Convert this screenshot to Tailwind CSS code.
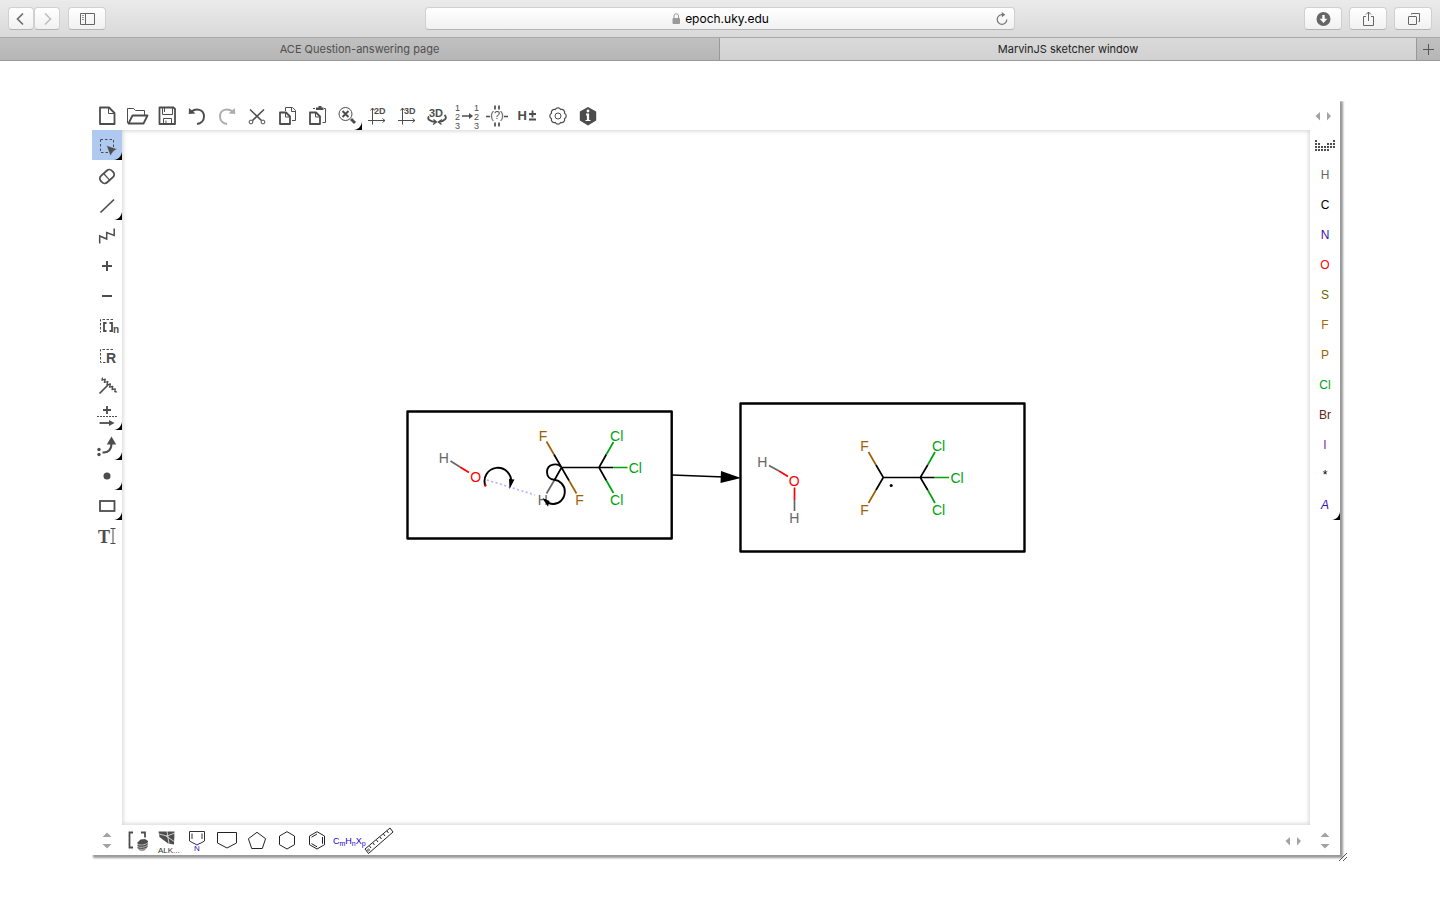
<!DOCTYPE html>
<html lang="en">
<head>
<meta charset="utf-8">
<meta name="viewport" content="width=device-width, initial-scale=1">
<title>MarvinJS sketcher window</title>
<script src="https://cdn.jsdelivr.net/npm/@tailwindcss/browser@4"></script>
</head>
<body class="flex min-h-screen flex-col bg-white font-['Liberation_Sans',Arial,sans-serif]">

<svg class="hidden" aria-hidden="true">
  <symbol id="corner" viewBox="0 0 30 30"><path d="M30 22V30H22C26 29.500 29 27 30 22Z" fill="#000" stroke="none"/></symbol>
  <symbol id="leftright" viewBox="0 0 30 30"><path d="M5.500 16 10 12V20.500ZM21 16 17 12V20.500Z" fill="#a3a3a3" stroke="none"/></symbol>
  <symbol id="updown" viewBox="0 0 30 30"><path d="M10.500 12 15 7.500 19.500 12ZM10.500 19 15 23.500 19.500 19Z" fill="#a3a3a3" stroke="none"/></symbol>
</svg>

<header class="font-[Inter,'Liberation_Sans',sans-serif]">
  <div class="flex h-[38px] items-center border-b border-[#a8a8a8] bg-linear-to-b from-[#ebebeb] to-[#d9d9d9] px-2">
    <div class="flex flex-1 items-center">
      <button aria-label="Back" class="flex h-[23px] w-[26px] items-center justify-center rounded border border-[#d0d0d0] border-b-[#b4b4b4] bg-linear-to-b from-white to-[#f1f1f1]">
        <svg class="size-4 fill-none stroke-[#6e6e6e]" viewBox="0 0 16 16"><path d="M10 2.500 4.500 8l5.500 5.500" stroke-width="1.700"/></svg>
      </button>
      <button aria-label="Forward" class="flex h-[23px] w-[26px] items-center justify-center rounded border border-[#d0d0d0] border-b-[#b4b4b4] bg-linear-to-b from-white to-[#f1f1f1]">
        <svg class="size-4 fill-none stroke-[#c0c0c0]" viewBox="0 0 16 16"><path d="M6 2.500 11.500 8 6 13.500" stroke-width="1.700"/></svg>
      </button>
      <button aria-label="Sidebar" class="ml-2 flex h-[23px] w-[38px] items-center justify-center rounded border border-[#d0d0d0] border-b-[#b4b4b4] bg-linear-to-b from-white to-[#f1f1f1]">
        <svg class="size-4 fill-none stroke-[#666]" viewBox="0 0 16 16"><path d="M1.500 2.500H15.500V13.500H1.500ZM6.500 2.500V13.500"/><path d="M3 4.500h2M3 6.500h2M3 8.500h2" stroke="#999"/></svg>
      </button>
    </div>
    <div class="relative flex h-[23px] w-[41.400%] items-center justify-center gap-1 rounded border border-[#d0d0d0] border-b-[#b4b4b4] bg-linear-to-b from-white to-[#f1f1f1]">
      <svg class="h-3 w-[10px] fill-none stroke-[#9a9a9a]" viewBox="0 0 10 12"><path d="M2 5.500H8.500V10.500H2Z" fill="#9a9a9a"/><path d="M3 6V3a2.200 2.200 0 0 1 4.500 0V6"/></svg>
      <input aria-label="Address" value="epoch.uky.edu" class="field-sizing-content bg-transparent text-xs text-black outline-none">
      <button aria-label="Reload" class="absolute right-1 flex">
        <svg class="size-4 fill-none stroke-[#777]" viewBox="0 0 16 16"><path d="M12.800 8.500A4.800 4.800 0 1 1 8 3.700H9.500" stroke-width="1.200"/><path d="M7.800 1 11.300 3.700 7.800 6.300Z" fill="#777" stroke="none"/></svg>
      </button>
    </div>
    <div class="flex flex-1 items-center justify-end gap-[7px]">
      <button aria-label="Downloads" class="flex h-[23px] w-[38px] items-center justify-center rounded border border-[#d0d0d0] border-b-[#b4b4b4] bg-linear-to-b from-white to-[#f1f1f1]">
        <svg class="size-4" viewBox="0 0 16 16"><circle cx="8.500" cy="8" r="7" fill="#666"/><path d="M7.300 4H9.700V7.800H12.300L8.500 12 4.700 7.800H7.300Z" fill="#fff"/></svg>
      </button>
      <button aria-label="Share" class="flex h-[23px] w-[38px] items-center justify-center rounded border border-[#d0d0d0] border-b-[#b4b4b4] bg-linear-to-b from-white to-[#f1f1f1]">
        <svg class="size-4 fill-none stroke-[#666]" viewBox="0 0 16 16"><path d="M6 5.500H3.500V14.500H13.500V5.500H11M8.500 10V1M6 3.500 8.500 1 11 3.500"/></svg>
      </button>
      <button aria-label="Tabs" class="flex h-[23px] w-[38px] items-center justify-center rounded border border-[#d0d0d0] border-b-[#b4b4b4] bg-linear-to-b from-white to-[#f1f1f1]">
        <svg class="size-4 fill-none stroke-[#666]" viewBox="0 0 16 16"><rect x="3.500" y="5.500" width="8" height="8" rx=".5"/><path d="M6.500 3.500V2.500H14.500V10.500H13.500"/></svg>
      </button>
    </div>
  </div>
  <nav class="flex h-[23px] border-b border-[#9b9b9b] text-[11px]">
    <a href="#" class="flex w-1/2 items-center justify-center border-r border-[#999] bg-linear-to-b from-[#c1c1c1] to-[#b6b6b6] text-[#4f4f4f]">ACE Question-answering page</a>
    <a href="#" class="flex flex-1 items-center justify-center bg-linear-to-b from-[#dadada] to-[#d1d1d1] text-[#222]">MarvinJS sketcher window</a>
    <button aria-label="New tab" class="flex w-6 items-center justify-center border-l border-[#999] bg-linear-to-b from-[#c1c1c1] to-[#b6b6b6]">
      <svg class="size-3 stroke-[#555]" viewBox="0 0 12 12"><path d="M0 6.500H11M5.500 1V12"/></svg>
    </button>
  </nav>
</header>

<main class="flex flex-1 pt-[39px] pr-[100px] pb-[45px] pl-[92px]">
  <div class="relative flex flex-1 flex-col bg-white fill-none stroke-[#4d4d4d] shadow-[2px_2px_2px_1px_#999] [clip-path:inset(1px_-8px_-8px_0px)]">

    <div class="flex h-[30px]" role="toolbar" aria-label="General">
      <button aria-label="New"><svg class="size-[30px]" viewBox="0 0 30 30"><path d="M8 7.500H17L22.500 13V24H8Z" stroke-width="1.800" stroke-linejoin="round"/><path d="M16.500 8V13.500H22"/></svg></button>
      <button aria-label="Open"><svg class="size-[30px]" viewBox="0 0 30 30"><path d="M5.500 23V8.500H11.500L13.500 10.500H22.500V15"/><path d="M6.500 23.500 10.500 15.500H25.500L21.500 23.500Z" stroke-width="1.800" stroke-linejoin="round"/></svg></button>
      <button aria-label="Save"><svg class="size-[30px]" viewBox="0 0 30 30"><path d="M7.500 7.500H21.500L23 9V24H7.500Z" stroke-width="1.800" stroke-linejoin="round"/><path d="M10.500 8V14.500H20.500V8M12.500 8V12M11.500 24V18.500H19.500V24M14 20.500V23"/></svg></button>
      <button aria-label="Undo"><svg class="size-[30px]" viewBox="0 0 30 30"><path d="M9.500 11.500C14 8 22 9 22 16.500C22 21 18.500 23.500 15 24" stroke-width="2"/><path d="M7 8 6.800 14 13.500 13.500Z" fill="#4d4d4d" stroke="none"/></svg></button>
      <button aria-label="Redo"><svg class="size-[30px]" viewBox="0 0 30 30"><path d="M20.500 11.500C16 8 8 9 8 16.500C8 21 11.500 23.500 15 24" stroke="#adadad" stroke-width="2"/><path d="M23 8 23.200 14 16.500 13.500Z" fill="#adadad" stroke="none"/></svg></button>
      <button aria-label="Cut"><svg class="size-[30px]" viewBox="0 0 30 30"><path d="M22 9.500 10.500 20.500M8 9.500 19.500 20.500" stroke-width="1.600"/><circle cx="9" cy="22" r="1.900"/><circle cx="21" cy="22" r="1.900"/></svg></button>
      <button aria-label="Copy"><svg class="size-[30px]" viewBox="0 0 30 30"><path d="M13.500 11V7.500H20.500L23.500 10.500V20.500H20M19.500 8V11.500H23"/><path d="M8 12.500H14L18 16.500V24H8Z" stroke-width="1.800" stroke-linejoin="round"/><path d="M13.500 13V17H17.500"/></svg></button>
      <button aria-label="Paste"><svg class="size-[30px]" viewBox="0 0 30 30"><path d="M11 8.500H13M22 8.500H23.500V22.500H20.500"/><path d="M14 7.500H16.500V6H19.500V7.500H21.500V10H14Z" fill="#4d4d4d" stroke="none"/><path d="M8 12.500H14L18 16.500V24H8Z" stroke-width="1.800" stroke-linejoin="round"/><path d="M13.500 13V17H17.500"/></svg></button>
      <button aria-label="Zoom"><svg class="size-[30px]" viewBox="0 0 30 30"><circle cx="13.500" cy="14" r="6.500"/><path d="M10.500 11 16.500 17M16.500 11 10.500 17" stroke-width="2"/><path d="M19 19 23 23" stroke-width="3"/><use href="#corner"/></svg></button>
      <button aria-label="Clean in 2D"><svg class="size-[30px]" viewBox="0 0 30 30"><path d="M10.500 24.500V8M8.500 10.500 10.500 8 12.500 10.500M6 20.500H23M20.500 18.500 23 20.500 20.500 22.500"/><text x="12" y="14" font-size="9" font-weight="700" fill="#4d4d4d" stroke="none">2D</text></svg></button>
      <button aria-label="Clean in 3D"><svg class="size-[30px]" viewBox="0 0 30 30"><path d="M10.500 24.500V8M8.500 10.500 10.500 8 12.500 10.500M6 20.500H23M20.500 18.500 23 20.500 20.500 22.500"/><text x="12" y="14" font-size="9" font-weight="700" fill="#4d4d4d" stroke="none">3D</text></svg></button>
      <button aria-label="3D viewer"><svg class="size-[30px]" viewBox="0 0 30 30"><text x="7" y="17" font-size="11" font-weight="700" fill="#4d4d4d" stroke="none">3D</text><path d="M7 16.500C4.500 19 8 21.500 14 22M22.500 15C26 18 22.500 21.500 16.500 22" stroke-width="1.800"/><path d="M11.500 19.500 14.500 22 11 24.500M20 19.500 16.500 22 19.500 24.500" stroke-width="1.300"/></svg></button>
      <button aria-label="Map atoms"><svg class="size-[30px]" viewBox="0 0 30 30"><g font-size="9" fill="#4d4d4d" stroke="none"><text x="3" y="11">1</text><text x="3" y="20">2</text><text x="3" y="29">3</text><text x="22" y="11">1</text><text x="22" y="20">2</text><text x="22" y="29">3</text></g><path d="M10 16H18" stroke-width="1.500"/><path d="M17 13 21 16 17 19Z" fill="#4d4d4d" stroke="none"/></svg></button>
      <button aria-label="Check structure"><svg class="size-[30px]" viewBox="0 0 30 30"><text x="15" y="19" text-anchor="middle" font-size="11" fill="#4d4d4d" stroke="none">(?)</text><path d="M13 5.500V9.500M17 5.500V9.500M13 22.500V26.500M17 22.500V26.500M4 16.500H8M22 16.500H26" stroke-width="1.700"/></svg></button>
      <button aria-label="Add or remove hydrogens"><svg class="size-[30px]" viewBox="0 0 30 30"><text x="5.500" y="20" font-size="13" font-weight="700" fill="#4d4d4d" stroke="none">H</text><path d="M17 14H24M20.500 10.500V17.500M17 19.500H24" stroke-width="1.800"/></svg></button>
      <button aria-label="Settings"><svg class="size-[30px]" viewBox="0 0 30 30"><path d="M22.500 18.700A3 3 0 0 1 18.700 22.500A3 3 0 0 1 13.300 22.500A3 3 0 0 1 9.500 18.700A3 3 0 0 1 9.500 13.300A3 3 0 0 1 13.300 9.500A3 3 0 0 1 18.700 9.500A3 3 0 0 1 22.500 13.300A3 3 0 0 1 22.500 18.700Z" stroke-width="1.200"/><circle cx="16" cy="16" r="3"/></svg></button>
      <button aria-label="About"><svg class="size-[30px]" viewBox="0 0 30 30"><path d="M16 7 24.200 11.500V20.500L16 25.500 7.800 20.500V11.500Z" fill="#4d4d4d" stroke="none"/><path d="M14 14.500H16V21" stroke="#fff" stroke-width="2.200"/><path d="M13.500 20.500H18.500" stroke="#fff"/><circle cx="16" cy="11" r="1.400" fill="#fff" stroke="none"/></svg></button>
      <button aria-label="Scroll elements" class="ml-auto"><svg class="size-[30px]"><use href="#leftright"/></svg></button>
    </div>

    <div class="flex flex-1">
      <div class="flex w-[30px] flex-col" role="toolbar" aria-label="Tools">
        <button aria-label="Select" class="bg-[#b0c9f0]"><svg class="size-[30px]" viewBox="0 0 30 30"><rect x="8.500" y="9.500" width="13" height="13" stroke-dasharray="2.500 2"/><path d="M14.500 15.500 25 19 21 21.500 18.500 26Z" fill="#4d4d4d" stroke="#b0c9f0" stroke-width=".5"/><use href="#corner"/></svg></button>
        <button aria-label="Erase"><svg class="size-[30px]" viewBox="0 0 30 30"><g transform="rotate(-42 15 16.500)"><rect x="7.500" y="12" width="15" height="9" rx="3.500" stroke-width="1.800"/><path d="M14.500 12V21" stroke-width="1.200"/></g></svg></button>
        <button aria-label="Bond"><svg class="size-[30px]" viewBox="0 0 30 30"><path d="M8.500 22.500 22 9.500" stroke-width="1.700"/><use href="#corner"/></svg></button>
        <button aria-label="Chain"><svg class="size-[30px]" viewBox="0 0 30 30"><path d="M7.700 23.500V16L14.700 19V12.500L22.200 15.500V8.500" stroke-width="1.500"/></svg></button>
        <button aria-label="Increase charge"><svg class="size-[30px]" viewBox="0 0 30 30"><path d="M10 16H20M15 11V21" stroke-width="2"/></svg></button>
        <button aria-label="Decrease charge"><svg class="size-[30px]" viewBox="0 0 30 30"><path d="M10 16H20" stroke-width="2"/></svg></button>
        <button aria-label="Repeating group"><svg class="size-[30px]" viewBox="0 0 30 30"><path d="M21 9.500H8.500V22.500" stroke-dasharray="2.500 1.500"/><path d="M14.500 13H12V21H14.500M17.500 13H20V21H17.500" stroke-width="1.800"/><text x="21" y="23" font-size="10" font-weight="700" fill="#4d4d4d" stroke="none">n</text></svg></button>
        <button aria-label="R-group"><svg class="size-[30px]" viewBox="0 0 30 30"><path d="M21 9.500H8.500V22.500H14" stroke-dasharray="2.500 1.500"/><text x="14" y="23" font-size="14" font-weight="700" fill="#4d4d4d" stroke="none">R</text></svg></button>
        <button aria-label="Attachment point"><svg class="size-[30px]" viewBox="0 0 30 30"><path d="M7.500 23.500 16 15" stroke-width="1.700"/><path d="M10.500 7.500 10 10.200 13.300 9.200 12.300 12.500 15.800 11.500 14.900 14.800 18.400 14 17.500 17.200 20.800 16.500 20 19.500 23.300 18.800 22.800 21.500 24.800 22" stroke-width="1.300" stroke-linejoin="round"/></svg></button>
        <button aria-label="Reaction"><svg class="size-[30px]" viewBox="0 0 30 30"><path d="M11 10H19M15 6V14" stroke-width="1.800"/><path d="M5 16.500H25" stroke-dasharray="2 1"/><path d="M7.500 23H18" stroke-width="1.800"/><path d="M17 20 22.500 23 17 26Z" fill="#4d4d4d" stroke="none"/><use href="#corner"/></svg></button>
        <button aria-label="Electron flow"><svg class="size-[30px]" viewBox="0 0 30 30"><path d="M10.500 22.500C16 23 19.500 20 19.500 13" stroke-width="2"/><path d="M19.500 6.500 24.200 14.500H14.800Z" fill="#4d4d4d" stroke="none"/><circle cx="7" cy="19.500" r="1.700" fill="#4d4d4d" stroke="none"/><circle cx="7" cy="24.500" r="1.700" fill="#4d4d4d" stroke="none"/><use href="#corner"/></svg></button>
        <button aria-label="Radical"><svg class="size-[30px]" viewBox="0 0 30 30"><circle cx="15" cy="16" r="3.500" fill="#4d4d4d" stroke="none"/><use href="#corner"/></svg></button>
        <button aria-label="Rectangle"><svg class="size-[30px]" viewBox="0 0 30 30"><rect x="8" y="11" width="14.500" height="10" stroke-width="1.800"/><use href="#corner"/></svg></button>
        <button aria-label="Text"><svg class="size-[30px]" viewBox="0 0 30 30"><text x="6" y="23" font-size="18" font-weight="700" font-family="Liberation Serif, serif" fill="#4d4d4d" stroke="none">T</text><path d="M18.500 8.500H23.500M18.500 23.500H23.500M21 8.500V23.500"/></svg></button>
      </div>

      <section aria-label="Drawing canvas" class="flex flex-1 items-center justify-center shadow-[inset_0_0_4px_1px_#d4d4d4]">
        <svg class="h-[151px] w-[620px] font-['Liberation_Sans',Arial,sans-serif] text-[14px]" viewBox="406 402 620 151">
          <g stroke="#000" stroke-width="2.400" stroke-linejoin="round">
            <rect x="407.500" y="411.500" width="264.200" height="127"/>
            <rect x="740.500" y="403.500" width="284" height="148"/>
          </g>
          <path d="M672 475 724 477" stroke="#000" stroke-width="1.700"/>
          <path d="M721 471 741 478 720.500 483Z" fill="#000" stroke="none"/>

          <g stroke-width="1.700">
            <path d="M450.500 461 460 467M554.500 480 546.500 493.500M769 465.500 779 471M794.500 500V511" stroke="#666"/>
            <path d="M460 467 469 472.500M779 471 788 476.500M794.500 487.500V500" stroke="#f00"/>
            <path d="M546.500 441.500 554 454.500M576.500 493.500 569 480.500M868.500 452 876 465M868.500 503 876 490" stroke="#a06000"/>
            <path d="M613.500 442 606.300 454.500M613 467.500H627.500M613.500 493 606.300 480.500M935 452 927.700 465M934.500 477.500H949M935 503 927.700 490" stroke="#00a010"/>
            <path d="M554 454.500 561.500 467.500H613M569 480.500 561.500 467.500 554.500 480M606.300 454.500 599 467.500 606.300 480.500M876 465 883.300 477.500H934.500M876 490 883.300 477.500M927.700 465 920.300 477.500 927.700 490" stroke="#000"/>
            <path d="M487 480 535 495" stroke="#b4b4ff" stroke-dasharray="2 2.500"/>
          </g>

          <g stroke="none" text-anchor="middle">
            <g fill="#666"><text x="443.700" y="463">H</text><text x="542.700" y="505">H</text><text x="762.300" y="467">H</text><text x="794.300" y="523">H</text></g>
            <g fill="#f00"><text x="475.700" y="482">O</text><text x="794.300" y="486">O</text></g>
            <g fill="#a06000"><text x="543" y="441">F</text><text x="579.500" y="505">F</text><text x="864.500" y="451">F</text><text x="864.500" y="515">F</text></g>
            <g fill="#00a010"><text x="616.700" y="441">Cl</text><text x="635.300" y="473">Cl</text><text x="616.700" y="505">Cl</text><text x="938.500" y="451">Cl</text><text x="957" y="483">Cl</text><text x="938.500" y="515">Cl</text></g>
          </g>
          <circle cx="891.200" cy="485.500" r="1.500" fill="#000" stroke="none"/>

          <g stroke="#000" stroke-width="1.900">
            <path d="M485.500 486A13.300 13.300 0 1 1 511 483"/>
            <path d="M561 467C558.500 463 547 463 547 472C547 477 550.500 479.500 554.300 479.800C560 480.500 564.800 485 564.800 491.500C564.800 499 559 504 553.300 504C549.500 504 546.500 502 544.500 500"/>
          </g>
          <path d="M509 479 514.500 479.500 509.500 489ZM542.500 498 549.500 501 548 506.700Z" fill="#000" stroke="none"/>
          <circle cx="485.300" cy="485.500" r="1.200" fill="#f00" stroke="none"/>
        </svg>
      </section>

      <div class="flex w-[30px] flex-col text-xs *:h-[30px]" role="toolbar" aria-label="Atoms">
        <button aria-label="Periodic table"><svg class="size-[30px]" viewBox="0 0 30 30"><path d="M5 11H7M23 11H25M5 14H10M17 14H25M5 17H25M5 20H19" stroke-width="2" stroke-dasharray="2 1"/></svg></button>
        <button class="text-[#666]">H</button>
        <button class="text-black">C</button>
        <button class="text-[#3311aa]">N</button>
        <button class="text-[#ff0000]">O</button>
        <button class="text-[#666600]">S</button>
        <button class="text-[#a66600]">F</button>
        <button class="text-[#996000]">P</button>
        <button class="text-[#00a010]">Cl</button>
        <button class="text-[#662222]">Br</button>
        <button class="text-[#7a1fa2]">I</button>
        <button class="text-black">*</button>
        <button class="relative text-[#3311aa] italic">A<svg class="absolute inset-0 size-[30px]"><use href="#corner"/></svg></button>
      </div>
    </div>

    <div class="flex h-[30px]" role="toolbar" aria-label="Templates">
      <button aria-label="Scroll tools"><svg class="size-[30px]"><use href="#updown"/></svg></button>
      <button aria-label="Template library"><svg class="size-[30px]" viewBox="0 0 30 30"><path d="M11 7.500H7.500V22.500H11M19 7.500H23V12.500" stroke-width="1.800"/><path d="M15.500 17.500 18.500 14.500 23 14 26 16 25.500 22.500 22 25.500 18 25.500 15.500 23.500Z" fill="#4d4d4d" stroke="none"/><path d="M15 19C18 20.500 23 20.500 26 17.500M15 21.300C18 23 23 22.500 26 20M15 23.500C18 25 23 24.700 26 22.300" stroke="#fff" stroke-width=".6"/></svg></button>
      <button aria-label="Alkaloids"><svg class="size-[30px]" viewBox="0 0 30 30"><path d="M6.500 6.500H22.500L22 19.500 16 18.500 7.500 12Z" fill="#4d4d4d" stroke="none"/><path d="M15 6 17 19M7 9 15 11 23 8M14 11 23 17" stroke="#fff" stroke-width=".7"/><text x="6" y="28" font-size="8" fill="#333" stroke="none">ALK...</text></svg></button>
      <button aria-label="Pyrrole"><svg class="size-[30px]" viewBox="0 0 30 30"><path d="M12 18.500 7.500 16V6.500H22.500V16L18 18.500M10 14V8.500M20 14V8.500" stroke="#333"/><path d="M12 18.300 15 20 18 18.300" stroke="#31a"/><text x="15" y="26" text-anchor="middle" font-size="8" fill="#31a" stroke="none">N</text></svg></button>
      <button aria-label="Cyclopentane"><svg class="size-[30px]" viewBox="0 0 30 30"><path d="M5.500 7.500H24.500V18L15 23 5.500 18Z" stroke="#222"/></svg></button>
      <button aria-label="Pentagon"><svg class="size-[30px]" viewBox="0 0 30 30"><path d="M15 7.300 23.600 13.700 20.300 23.500H9.700L6.400 13.700Z" stroke="#222"/></svg></button>
      <button aria-label="Cyclohexane"><svg class="size-[30px]" viewBox="0 0 30 30"><path d="M15 6.700 22.500 11V19.700L15 24 7.500 19.700V11Z" stroke="#222"/></svg></button>
      <button aria-label="Benzene"><svg class="size-[30px]" viewBox="0 0 30 30"><path d="M15 6.700 22.500 11V19.700L15 24 7.500 19.700V11ZM9.500 12.200 15 9M20.500 12V18.700M9.500 18.600 15 21.800" stroke="#222"/></svg></button>
      <button aria-label="Formula"><svg class="size-[30px] overflow-visible" viewBox="0 0 30 30"><g fill="#2200dd" stroke="none" font-size="9"><text x="1" y="19">C<tspan font-size="7" dy="2">m</tspan><tspan dy="-2">H</tspan><tspan font-size="7" dy="2">n</tspan><tspan dy="-2">X</tspan><tspan font-size="7" dy="2">p</tspan></text></g></svg></button>
      <button aria-label="Ruler"><svg class="size-[30px] overflow-visible" viewBox="0 0 30 30"><path d="M28 3 31 7 6.500 28.500 3 24Z" stroke="#222"/><path d="M25 6 26.500 8M21.500 9 23 11M18 12 19.500 14M14.500 15 16 17M11 18 12.500 20M7.500 21 9 23" stroke="#222"/><circle cx="6.500" cy="25" r="1" stroke="#222" stroke-width=".7"/></svg></button>
      <button aria-label="Scroll templates" class="ml-auto"><svg class="size-[30px]"><use href="#leftright"/></svg></button>
      <button aria-label="Scroll atoms"><svg class="size-[30px]"><use href="#updown"/></svg></button>
    </div>

    <svg class="absolute -right-[7px] -bottom-[6px] size-2" viewBox="0 0 8 8" aria-hidden="true"><path d="M0 8 8 0M4 8 8 4" stroke="#555"/></svg>
  </div>
</main>
</body>
</html>
